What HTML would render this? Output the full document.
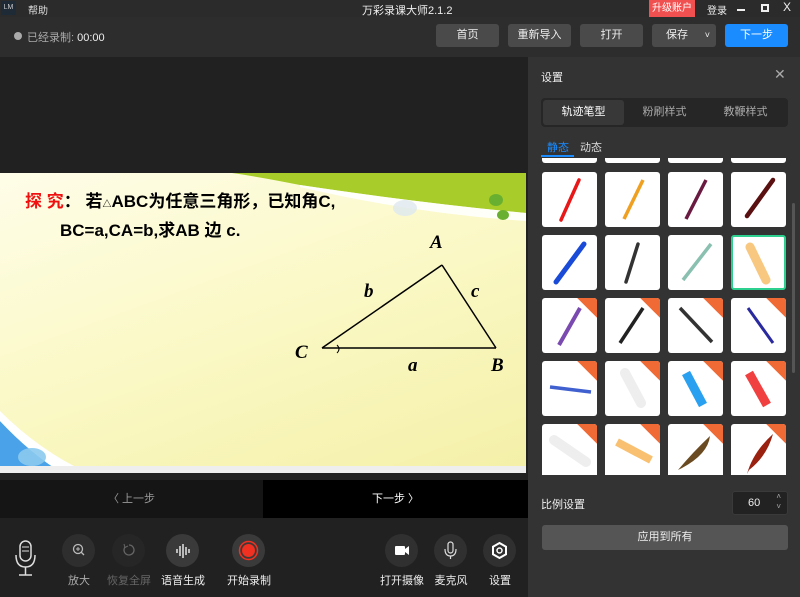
<!DOCTYPE html>
<html><head><meta charset="utf-8"><style>
*{margin:0;padding:0;box-sizing:border-box}
body{width:800px;height:597px;overflow:hidden;background:#212121;font-family:"Liberation Sans","Noto Sans CJK SC",sans-serif;font-size:11px;color:#ddd;position:relative}
.a{position:absolute}
.btn{position:absolute;top:24px;height:23px;background:#4a4a4a;border-radius:3px;color:#eee;font-size:11px;text-align:center;line-height:23px}
.tile{position:absolute;width:55px;height:55px;background:#fff;border-radius:3px;overflow:hidden}
.tile svg{position:absolute;left:0;top:0}
.badge{position:absolute;right:-14px;top:-14px;width:28px;height:28px;background:#f06a35;transform:rotate(45deg)}
.circ{position:absolute;top:534px;width:33px;height:33px;border-radius:50%;background:#2e2e2e}
.lbl{position:absolute;top:572px;font-size:11px;color:#eee;text-align:center;width:60px}
</style></head><body>
<div class="a" style="left:0;top:0;width:800px;height:17px;background:#2b2b2b"></div>
<div class="a" style="left:1px;top:1px;width:15px;height:14px;background:#1e2a36;color:#ccc;font-size:7px;line-height:14px;text-align:center">LM</div>
<div class="a" style="left:28px;top:2px;font-size:10px;color:#ddd">帮助</div>
<div class="a" style="left:362px;top:2px;font-size:11px;color:#eee">万彩录课大师2.1.2</div>
<div class="a" style="left:649px;top:0;width:46px;height:17px;background:#f05050;color:#fff;font-size:10px;line-height:17px;text-align:center">升级账户</div>
<div class="a" style="left:707px;top:2px;font-size:10px;color:#eee">登录</div>
<div class="a" style="left:737px;top:9px;width:8px;height:2px;background:#eee"></div>
<div class="a" style="left:761px;top:4px;width:8px;height:8px;border:2px solid #eee"></div>
<div class="a" style="left:783px;top:0px;font-size:12px;color:#eee">X</div>
<div class="a" style="left:0;top:17px;width:800px;height:40px;background:#2d2d2d"></div>
<div class="a" style="left:14px;top:32px;width:8px;height:8px;border-radius:50%;background:#aaa"></div>
<div class="a" style="left:27px;top:29px;font-size:11px;color:#aaa">已经录制: <span style="color:#eee">00:00</span></div>
<div class="btn" style="left:436px;width:63px">首页</div>
<div class="btn" style="left:508px;width:63px">重新导入</div>
<div class="btn" style="left:580px;width:63px">打开</div>
<div class="btn" style="left:652px;width:64px;text-align:left;padding-left:14px">保存<span style="position:absolute;right:6px;font-size:9px">˅</span></div>
<div class="btn" style="left:725px;width:63px;background:#1a8cff;color:#fff">下一步</div>
<div class="a" style="left:0;top:57px;width:528px;height:423px;background:#212121"></div>
<div class="a" style="left:0;top:173px;width:526px;height:300px;overflow:hidden;background:linear-gradient(160deg,#fefde8 0%,#fbf9c8 45%,#f4f0a8 100%)">
<svg width="526" height="300" style="position:absolute;left:0;top:0">
<path d="M232 0 L526 0 L526 40 Q420 30 300 12 Q260 4 232 0Z" fill="#a8cc2a"/>
<path d="M300 12 Q420 30 526 40 L526 48 Q410 40 300 14Z" fill="#fff" opacity=".9"/>
<path d="M0 248 Q30 280 62 300 L0 300Z" fill="#4aa3e8"/>
<path d="M0 238 Q40 278 88 300 L62 300 Q30 280 0 248Z" fill="#fff"/>
<ellipse cx="32" cy="284" rx="14" ry="9" fill="#8ccaf0" opacity=".9"/>
<ellipse cx="405" cy="35" rx="12" ry="8" fill="#dfe8f0" opacity=".8"/>
<ellipse cx="496" cy="27" rx="7" ry="6" fill="#6ab030"/>
<ellipse cx="503" cy="42" rx="6" ry="5" fill="#6ab030"/>
<rect x="0" y="293" width="526" height="7" fill="#eeeeee"/>
<line x1="322" y1="175" x2="496" y2="175" stroke="#000" stroke-width="1.5"/>
<line x1="322" y1="175" x2="442" y2="92" stroke="#000" stroke-width="1.5"/>
<line x1="442" y1="92" x2="496" y2="175" stroke="#000" stroke-width="1.5"/>
<path d="M337 172 Q341 176 337 180" stroke="#000" fill="none"/>
<g font-family="Liberation Serif,serif" font-style="italic" font-weight="bold" font-size="19" fill="#000">
<text x="430" y="75">A</text><text x="364" y="124">b</text><text x="471" y="124">c</text>
<text x="295" y="185">C</text><text x="408" y="198">a</text><text x="491" y="198">B</text></g>
</svg>
<div class="a" style="left:25px;top:14px;font-size:17px;font-weight:bold;color:#000;white-space:nowrap"><span style="color:#f01010">探 究</span>：&nbsp;若<span style="font-size:9px">△</span>ABC为任意三角形，已知角C,</div>
<div class="a" style="left:60px;top:43px;font-size:17px;font-weight:bold;color:#000;white-space:nowrap">BC=a,CA=b,求AB 边 c.</div>
</div>
<div class="a" style="left:0;top:480px;width:263px;height:38px;background:#151515;color:#999;font-size:11px;text-align:center;line-height:38px">〈 上一步</div>
<div class="a" style="left:263px;top:480px;width:265px;height:38px;background:#000;color:#fff;font-size:11px;text-align:center;line-height:38px">下一步 〉</div>
<div class="a" style="left:0;top:518px;width:528px;height:79px;background:#212121"></div>
<svg class="a" style="left:14px;top:540px" width="24" height="38"><rect x="6" y="1" width="11" height="20" rx="5.5" fill="none" stroke="#ddd" stroke-width="1.5"/><path d="M2 15 Q2 27 11.5 27 Q21 27 21 15" fill="none" stroke="#ddd" stroke-width="1.5"/><line x1="11.5" y1="27" x2="11.5" y2="35" stroke="#ddd" stroke-width="1.5"/><line x1="5" y1="35" x2="18" y2="35" stroke="#ddd" stroke-width="1.5"/><line x1="8" y1="7" x2="15" y2="7" stroke="#ddd"/><line x1="8" y1="11" x2="15" y2="11" stroke="#ddd"/></svg>
<div class="circ" style="left:62px"><svg width="33" height="33"><circle cx="16" cy="15" r="4.5" fill="none" stroke="#bbb" stroke-width="1.3"/><line x1="19" y1="18" x2="22" y2="21" stroke="#bbb" stroke-width="1.3"/><path d="M14 15h4M16 13v4" stroke="#bbb"/></svg></div>
<div class="circ" style="left:112px;background:#262626"><svg width="33" height="33"><path d="M13 13 A5 5 0 1 0 17 11" fill="none" stroke="#666" stroke-width="1.3"/><path d="M12 10 L13 13.5 L16 12" fill="none" stroke="#666"/></svg></div>
<div class="circ" style="left:166px;background:#3a3a3a"><svg width="33" height="33" stroke="#fff" stroke-width="1.3"><line x1="11" y1="15" x2="11" y2="19"/><line x1="14" y1="12" x2="14" y2="22"/><line x1="17" y1="10" x2="17" y2="24"/><line x1="20" y1="13" x2="20" y2="21"/><line x1="23" y1="15" x2="23" y2="19"/></svg></div>
<div class="circ" style="left:232px;background:#3a3a3a"><svg width="33" height="33"><circle cx="16.5" cy="16.5" r="9" fill="none" stroke="#f03020" stroke-width="1.5"/><circle cx="16.5" cy="16.5" r="6.5" fill="#f03020"/></svg></div>
<div class="circ" style="left:385px;background:#303030"><svg width="33" height="33"><rect x="10" y="12" width="10" height="9" rx="1" fill="#fff"/><path d="M20 15 L24 12 V21 L20 18Z" fill="#fff"/></svg></div>
<div class="circ" style="left:434px;background:#303030"><svg width="33" height="33" stroke="#ddd" fill="none" stroke-width="1.2"><rect x="14" y="8" width="5" height="11" rx="2.5"/><path d="M11 15 Q11 22 16.5 22 Q22 22 22 15"/><line x1="16.5" y1="22" x2="16.5" y2="25"/></svg></div>
<div class="circ" style="left:483px;background:#303030"><svg width="33" height="33"><path d="M16.5 9 L23 12.7 V20.3 L16.5 24 L10 20.3 V12.7Z" fill="none" stroke="#fff" stroke-width="2"/><circle cx="16.5" cy="16.5" r="2.5" fill="none" stroke="#fff" stroke-width="1.5"/></svg></div>
<div class="lbl" style="left:49px;color:#aaa">放大</div>
<div class="lbl" style="left:99px;color:#666">恢复全屏</div>
<div class="lbl" style="left:153px">语音生成</div>
<div class="lbl" style="left:219px">开始录制</div>
<div class="lbl" style="left:372px">打开摄像</div>
<div class="lbl" style="left:421px">麦克风</div>
<div class="lbl" style="left:470px">设置</div>
<div class="a" style="left:528px;top:57px;width:272px;height:540px;background:#333"></div>
<div class="a" style="left:541px;top:69px;font-size:11px;color:#eee">设置</div>
<div class="a" style="left:774px;top:66px;font-size:14px;color:#aaa">✕</div>
<div class="a" style="left:541px;top:98px;width:247px;height:29px;background:#262626;border-radius:4px"></div>
<div class="a" style="left:543px;top:100px;width:81px;height:25px;background:#383838;border-radius:3px;color:#fff;text-align:center;line-height:25px">轨迹笔型</div>
<div class="a" style="left:624px;top:100px;width:81px;height:25px;color:#aaa;text-align:center;line-height:25px">粉刷样式</div>
<div class="a" style="left:705px;top:100px;width:81px;height:25px;color:#aaa;text-align:center;line-height:25px">教鞭样式</div>
<div class="a" style="left:547px;top:139px;color:#1a8cff">静态</div>
<div class="a" style="left:580px;top:139px;color:#ddd">动态</div>
<div class="a" style="left:541px;top:155px;width:33px;height:2px;background:#1a8cff"></div>
<div class="a" style="left:541px;top:158px;width:250px;height:317px;overflow:hidden">
<div class="tile" style="left:1px;top:-50px"></div><div class="tile" style="left:64px;top:-50px"></div><div class="tile" style="left:127px;top:-50px"></div><div class="tile" style="left:190px;top:-50px"></div>
<div class="tile" style="left:1px;top:14px"><svg width="55" height="55"><line x1="37" y1="8" x2="19" y2="48" stroke="#e81818" stroke-width="3.5" stroke-linecap="round"/></svg></div>
<div class="tile" style="left:64px;top:14px"><svg width="55" height="55"><line x1="38" y1="8" x2="19" y2="47" stroke="#f0a020" stroke-width="3.5"/></svg></div>
<div class="tile" style="left:127px;top:14px"><svg width="55" height="55"><line x1="38" y1="8" x2="18" y2="47" stroke="#6a1a40" stroke-width="3.5"/></svg></div>
<div class="tile" style="left:190px;top:14px"><svg width="55" height="55"><line x1="42" y1="8" x2="16" y2="44" stroke="#5a1010" stroke-width="4.5" stroke-linecap="round"/></svg></div>
<div class="tile" style="left:1px;top:77px"><svg width="55" height="55"><line x1="42" y1="9" x2="14" y2="47" stroke="#1a4ad8" stroke-width="5" stroke-linecap="round"/></svg></div>
<div class="tile" style="left:64px;top:77px"><svg width="55" height="55"><line x1="33" y1="9" x2="21" y2="47" stroke="#333" stroke-width="3.5" stroke-linecap="round"/></svg></div>
<div class="tile" style="left:127px;top:77px"><svg width="55" height="55"><line x1="43" y1="9" x2="15" y2="45" stroke="#8ac0b0" stroke-width="3.5"/></svg></div>
<div class="tile" style="left:190px;top:77px;border:2px solid #2ed08f"><svg width="55" height="55"><line x1="17" y1="10" x2="33" y2="43" stroke="#f8c880" stroke-width="9" stroke-linecap="round"/></svg></div>
<div class="tile" style="left:1px;top:140px"><svg width="55" height="55"><line x1="38" y1="10" x2="17" y2="47" stroke="#7a4ab0" stroke-width="4"/></svg><div class="badge"></div></div>
<div class="tile" style="left:64px;top:140px"><svg width="55" height="55"><line x1="38" y1="10" x2="15" y2="45" stroke="#222" stroke-width="3.5"/></svg><div class="badge"></div></div>
<div class="tile" style="left:127px;top:140px"><svg width="55" height="55"><line x1="12" y1="10" x2="44" y2="44" stroke="#333" stroke-width="3.5"/></svg><div class="badge"></div></div>
<div class="tile" style="left:190px;top:140px"><svg width="55" height="55"><line x1="17" y1="10" x2="42" y2="45" stroke="#2a2aa0" stroke-width="3"/></svg><div class="badge"></div></div>
<div class="tile" style="left:1px;top:203px"><svg width="55" height="55"><line x1="8" y1="26" x2="49" y2="31" stroke="#4060d0" stroke-width="3.5"/></svg><div class="badge"></div></div>
<div class="tile" style="left:64px;top:203px"><svg width="55" height="55"><line x1="20" y1="12" x2="36" y2="42" stroke="#eee" stroke-width="10" stroke-linecap="round"/></svg><div class="badge"></div></div>
<div class="tile" style="left:127px;top:203px"><svg width="55" height="55"><line x1="18" y1="12" x2="35" y2="44" stroke="#2aa0f0" stroke-width="9"/></svg><div class="badge"></div></div>
<div class="tile" style="left:190px;top:203px"><svg width="55" height="55"><line x1="18" y1="12" x2="36" y2="44" stroke="#f04040" stroke-width="9"/></svg><div class="badge"></div></div>
<div class="tile" style="left:1px;top:266px"><svg width="55" height="55"><line x1="12" y1="16" x2="44" y2="38" stroke="#eee" stroke-width="10" stroke-linecap="round"/></svg><div class="badge"></div></div>
<div class="tile" style="left:64px;top:266px"><svg width="55" height="55"><line x1="12" y1="18" x2="46" y2="36" stroke="#f8c070" stroke-width="8"/></svg><div class="badge"></div></div>
<div class="tile" style="left:127px;top:266px"><svg width="55" height="55"><path d="M10 46 Q25 28 42 12 Q40 30 14 44Z" fill="#6a4a20"/></svg><div class="badge"></div></div>
<div class="tile" style="left:190px;top:266px"><svg width="55" height="55"><path d="M16 50 Q22 28 42 10 Q36 32 18 46Z" fill="#9a2010"/></svg><div class="badge"></div></div>
</div>
<div class="a" style="left:792px;top:203px;width:3px;height:170px;background:#555;border-radius:2px"></div>
<div class="a" style="left:541px;top:496px;font-size:11px;color:#eee">比例设置</div>
<div class="a" style="left:732px;top:491px;width:56px;height:24px;background:#222;border:1px solid #3a3a3a;border-radius:3px;color:#eee;line-height:22px;padding-left:15px">60<span style="position:absolute;right:6px;top:0;font-size:8px;line-height:10px;color:#aaa">˄<br>˅</span></div>
<div class="a" style="left:542px;top:525px;width:246px;height:25px;background:#555;border-radius:3px;color:#eee;text-align:center;line-height:25px">应用到所有</div>
</body></html>
